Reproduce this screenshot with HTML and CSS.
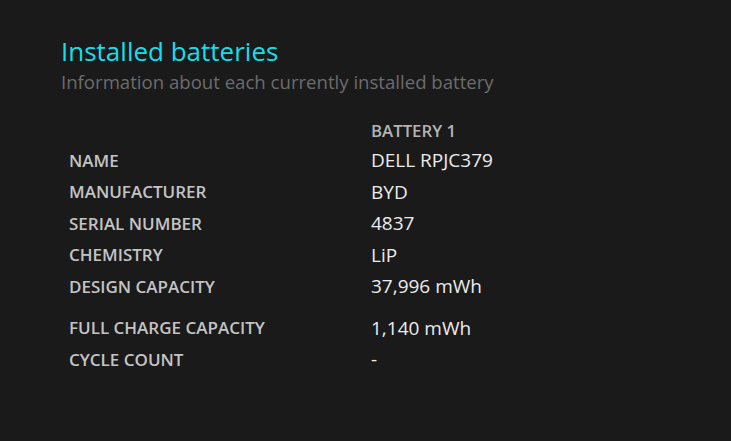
FILE: index.html
```html
<!DOCTYPE html>
<html lang="en">
<head>
  <meta charset="UTF-8" />
  <title>Battery report</title>
  <link rel="stylesheet" href="styles.css">
</head>
<body>
  <section class="batteries">
    <h2>Installed batteries</h2>
    <div class="explanation">Information about each currently installed battery</div>

    <table class="battery-table">
      <thead>
        <tr>
          <td class="label"></td>
          <td class="col-head">BATTERY 1</td>
        </tr>
      </thead>
      <tbody>
        <tr><td class="label">NAME</td><td class="value">DELL RPJC379</td></tr>
        <tr><td class="label">MANUFACTURER</td><td class="value">BYD</td></tr>
        <tr><td class="label">SERIAL NUMBER</td><td class="value">4837</td></tr>
        <tr><td class="label">CHEMISTRY</td><td class="value">LiP</td></tr>
        <tr><td class="label">DESIGN CAPACITY</td><td class="value">37,996 mWh</td></tr>
        <tr class="spacer"><td colspan="2"></td></tr>
        <tr><td class="label">FULL CHARGE CAPACITY</td><td class="value">1,140 mWh</td></tr>
        <tr><td class="label">CYCLE COUNT</td><td class="value">-</td></tr>
      </tbody>
    </table>
  </section>
</body>
</html>
```

FILE: styles.css
```css
* {
  box-sizing: border-box;
}
body {
  margin: 0;
  font-family: 'Open Sans', 'Noto Sans', sans-serif;
  background: #1a1a1a;
  color: #e6e6e6;
  padding: 34px 61px;
}

h2 {
  margin: 0;
  font-weight: 400;
  font-size: 26px;
  line-height: 34px;
  color: #14dfea;
}

.explanation {
  margin-top: 2px;
  font-size: 18.6px;
  line-height: 24px;
  color: #6c6c6c;
}

/* Battery table */
.battery-table {
  border-collapse: collapse;
  margin-top: 19px;
}

.battery-table td {
  padding: 0 0 0 8px;
  height: 31.5px;
  vertical-align: middle;
}

.battery-table .label {
  width: 302px;
  font-size: 17px;
  font-weight: 600;
  color: #c4c4c4;
}

.battery-table .col-head {
  font-size: 16.8px;
  font-weight: 600;
  color: #b4b4b4;
  height: 28px;
  padding-bottom: 3px;
  vertical-align: bottom;
}

.battery-table .value {
  font-size: 19px;
  color: #ececec;
}

.battery-table .spacer td {
  height: 10px;
}
```
